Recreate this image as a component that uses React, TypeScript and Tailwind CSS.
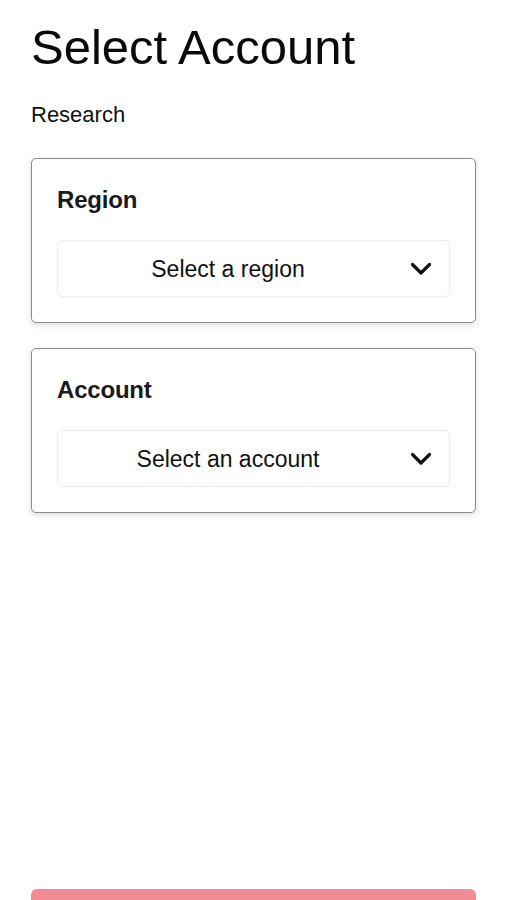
import React from "react";

function Chevron() {
  return (
    <svg width="22" height="14" viewBox="0 0 22 14" fill="none" aria-hidden="true">
      <polyline
        points="2.5,2.5 11,11 19.5,2.5"
        stroke="#111"
        strokeWidth="3.2"
        strokeLinecap="round"
        strokeLinejoin="round"
      />
    </svg>
  );
}

function SelectCard({ label, placeholder }: { label: string; placeholder: string }) {
  return (
    <div className="rounded-[5px] border border-[#8c8c8c] bg-white px-[25px] pt-[29px] pb-[25px] shadow-[0_2px_6px_rgba(0,0,0,0.14)]">
      <div className="text-[24px] leading-none font-bold text-[#1a1a1a] tracking-[-0.2px]">{label}</div>
      <div className="mt-[28px] flex h-[57px] items-center rounded-[5px] border border-[#ececec] bg-white">
        <span className="flex-1 pt-[1px] text-center text-[23px] leading-none text-[#111]">{placeholder}</span>
        <span className="ml-[12px] mr-[17px] flex items-center">
          <Chevron />
        </span>
      </div>
    </div>
  );
}

export default function App() {
  return (
    <div
      className="min-h-[900px] bg-white px-[31px] pt-[23px]"
      style={{ fontFamily: '"Liberation Sans", Arial, sans-serif' }}
    >
      <h1 className="text-[49px] leading-none font-normal text-[#0a0a0a]">Select Account</h1>
      <p className="mt-[32px] text-[22px] leading-none text-[#111]">Research</p>
      <div className="mt-[32px] flex flex-col gap-[25px]">
        <SelectCard label="Region" placeholder="Select a region" />
        <SelectCard label="Account" placeholder="Select an account" />
      </div>
      <button className="mt-[376px] block h-[50px] w-full rounded-[6px] bg-[#f38b95]" aria-label="Continue" />
    </div>
  );
}
